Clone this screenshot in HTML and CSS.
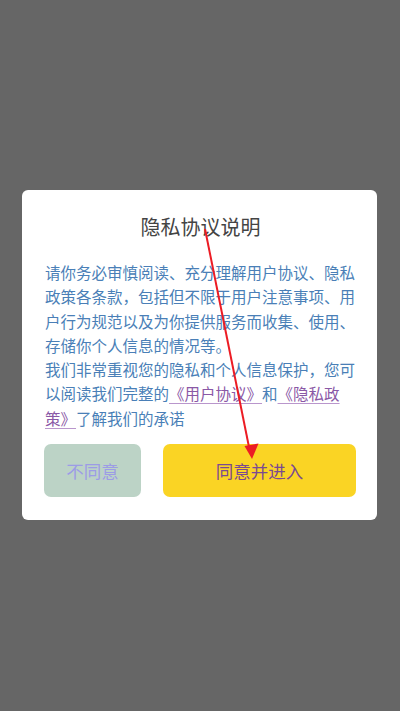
FILE: index.html
```html
<!DOCTYPE html>
<html lang="zh">
<head>
<meta charset="utf-8">
<link rel="stylesheet" href="styles.css">
</head>
<body>
<div class="screen">
  <div class="dialog">
    <h1 class="title">隐私协议说明</h1>
    <p class="body">请你务必审慎阅读、充分理解用户协议、隐私政策各条款，包括但不限于用户注意事项、用户行为规范以及为你提供服务而收集、使用、存储你个人信息的情况等。<br>我们非常重视您的隐私和个人信息保护，您可以阅读我们完整的<a class="link">《用户协议》</a>和<a class="link">《隐私政策》</a>了解我们的承诺</p>
    <div class="actions">
      <div class="btn btn-cancel">不同意</div>
      <div class="btn btn-ok">同意并进入</div>
    </div>
  </div>
  <svg class="arrow" width="400" height="711" viewBox="0 0 400 711">
    <line x1="205" y1="229" x2="249" y2="447" stroke="#ec1c24" stroke-width="2"/>
    <polygon points="244.5,446 258.5,443.5 252,459" fill="#ec1c24"/>
  </svg>
</div>
</body>
</html>
```
FILE: styles.css
```css
* { box-sizing: border-box; }
html, body { margin: 0; padding: 0; }
body {
  background: #666666;
  font-family: "Noto Sans CJK SC", "Noto Sans", sans-serif;
}
.screen {
  position: relative;
  width: 400px;
  height: 711px;
  padding-top: 190px;
  padding-left: 22px;
}
.dialog {
  width: 355px;
  height: 330px;
  background: #ffffff;
  border-radius: 6px;
  padding: 23px 21px 0 23px;
}
.title {
  margin: 0;
  font-weight: normal;
  font-size: 20px;
  line-height: 28px;
  height: 28px;
  text-align: center;
  color: #444444;
}
.body {
  margin: 19px 0 0 0;
  font-size: 15.5px;
  line-height: 24.25px;
  color: #4a7fb7;
  height: 170px;
}
.link {
  color: #8a58a6;
  text-decoration: underline;
  text-decoration-color: #b996cc;
  text-underline-offset: 3px;
}
.actions {
  margin-top: 14px;
  display: flex;
  gap: 22px;
  margin-left: -1px;
}
.btn {
  height: 53px;
  border-radius: 7px;
  display: flex;
  align-items: center;
  justify-content: center;
  font-size: 17.5px;
}
.btn-cancel {
  width: 97px;
  background: #bcd3c6;
  color: #9c9ce6;
}
.btn-ok {
  width: 193px;
  background: #fad424;
  color: #7a4a92;
}
.arrow {
  position: absolute;
  left: 0;
  top: 0;
  pointer-events: none;
}
```
